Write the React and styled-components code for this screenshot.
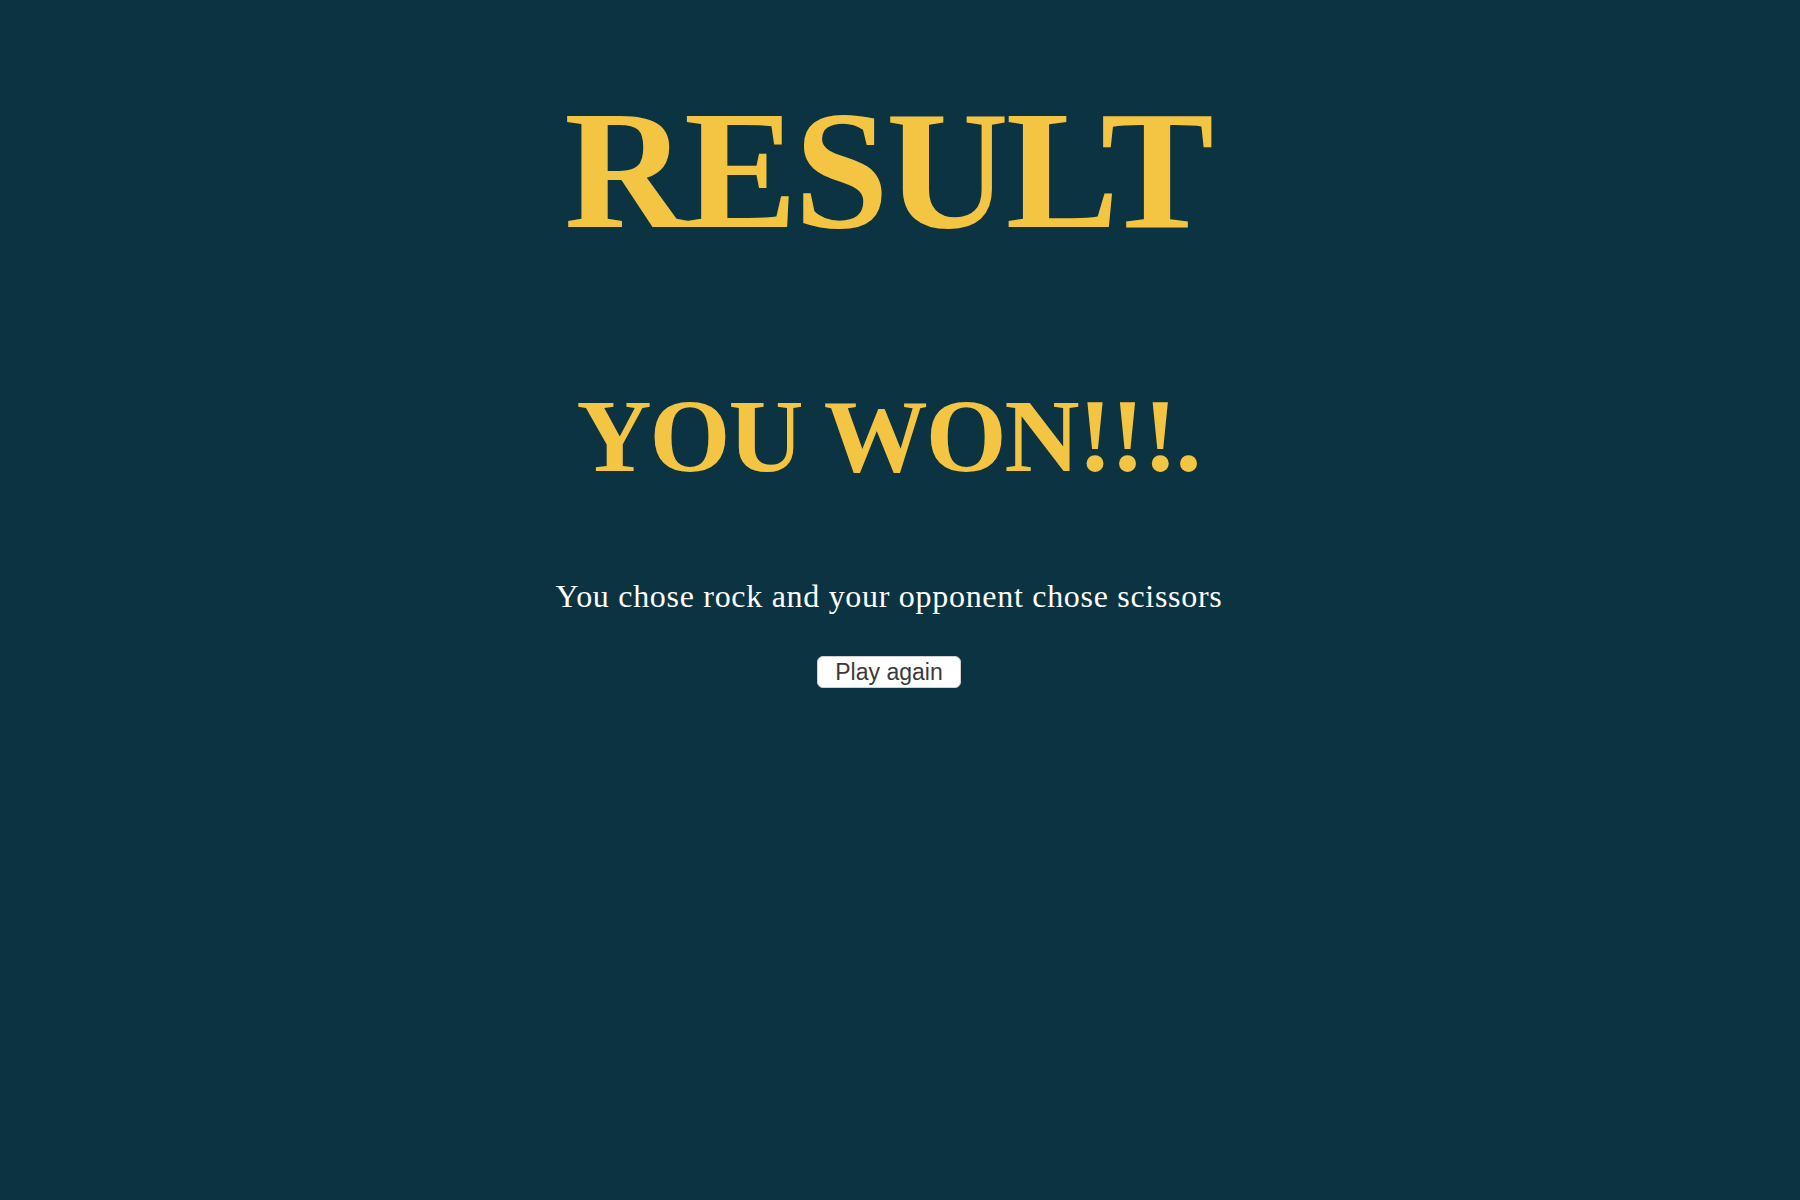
import React from "react";
import styled, { createGlobalStyle } from "styled-components";

const GlobalStyle = createGlobalStyle`
  html, body {
    margin: 0;
    padding: 0;
    background: #0b3341;
  }
  body {
    font-family: "Liberation Serif", "Times New Roman", serif;
  }
`;

const Page = styled.main`
  min-height: 1200px;
  box-sizing: border-box;
  display: flex;
  flex-direction: column;
  align-items: center;
  padding: 85px 22px 0 0;
  background: #0b3341;
`;

const Title = styled.h1`
  margin: 0;
  font-family: "Liberation Serif", "Times New Roman", serif;
  font-weight: 700;
  font-size: ${(p) => p.$size}px;
  line-height: 1;
  letter-spacing: ${(p) => p.$spacing}px;
  color: #f4c542;
  margin-top: ${(p) => p.$top || 0}px;
  margin-right: ${(p) => -p.$spacing}px;
`;

const Summary = styled.p`
  margin: 92px 0 0;
  font-family: "Liberation Serif", "Times New Roman", serif;
  font-size: 32px;
  line-height: 1;
  letter-spacing: 0.7px;
  color: #ffffff;
`;

const Button = styled.button`
  margin-top: 44px;
  box-sizing: border-box;
  height: 32px;
  padding: 2px 17px;
  border: 1px solid #d0d0d0;
  border-radius: 6px;
  background: #ffffff;
  color: #3a3a3a;
  font-family: "Liberation Sans", Arial, sans-serif;
  font-size: 23px;
  line-height: 26px;
  cursor: pointer;
`;

export default function App() {
  return (
    <>
      <GlobalStyle />
      <Page>
        <Title $size={170} $spacing={-3}>RESULT</Title>
        <Title $size={104} $spacing={-2} $top={129}>YOU WON!!!.</Title>
        <Summary>You chose rock and your opponent chose scissors</Summary>
        <Button type="button">Play again</Button>
      </Page>
    </>
  );
}
